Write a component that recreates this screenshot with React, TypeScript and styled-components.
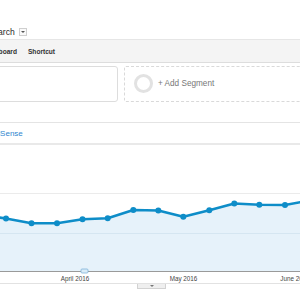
import React from "react";
import styled, { createGlobalStyle } from "styled-components";

const GlobalStyle = createGlobalStyle`
  html, body {
    margin: 0;
    padding: 0;
    background: #ffffff;
    font-family: "Liberation Sans", Arial, sans-serif;
  }
`;

interface IPoint {
  x: number;
  y: number;
}

// sessions per week, already in screen coordinates
const points: IPoint[] = [
  { x: -19, y: 214 },
  { x: 6, y: 217.5 },
  { x: 31.5, y: 222.3 },
  { x: 57, y: 222.3 },
  { x: 82.5, y: 218.3 },
  { x: 107.7, y: 217.3 },
  { x: 133.3, y: 209 },
  { x: 158.3, y: 209.5 },
  { x: 183.3, y: 215.7 },
  { x: 209.3, y: 209.3 },
  { x: 234.3, y: 202.5 },
  { x: 259.3, y: 203.7 },
  { x: 285, y: 204 },
  { x: 310, y: 199.5 },
];

const AXIS_Y = 270;

const monthLabels = [
  { x: 75, text: "April 2016" },
  { x: 183.5, text: "May 2016" },
  { x: 295, text: "June 2016" },
];

function SessionsChart() {
  const line = points.map((p, i) => `${i === 0 ? "M" : "L"}${p.x} ${p.y}`).join(" ");
  const area = `${line} L${points[points.length - 1].x} ${AXIS_Y} L${points[0].x} ${AXIS_Y} Z`;

  return (
    <ChartSvg width="300" height="138" viewBox="0 144 300 138">
      <line x1="0" y1="192.5" x2="300" y2="192.5" stroke="#ebebeb" strokeWidth="1" />
      <path d={area} fill="#e6f2fa" />
      <line x1="0" y1="232.5" x2="300" y2="232.5" stroke="#d5e6f1" strokeWidth="1" />
      <path d={line} fill="none" stroke="#0e8dc8" strokeWidth="2.6" strokeLinejoin="round" />
      {points.map((p) => (
        <circle key={p.x} cx={p.x} cy={p.y} r="3" fill="#0e8dc8" />
      ))}
      <line x1="0" y1={AXIS_Y + 0.5} x2="300" y2={AXIS_Y + 0.5} stroke="#9a9a9a" strokeWidth="1" />
      <rect x="81" y="268" width="7" height="4" rx="1" fill="#d9ecf8" stroke="#7fb3d8" strokeWidth="0.8" />
      {monthLabels.map((m) => (
        <MonthLabel key={m.text} x={m.x} y="279.5" textAnchor="middle">
          {m.text}
        </MonthLabel>
      ))}
    </ChartSvg>
  );
}

function App() {
  return (
    <>
      <GlobalStyle />
      <Frame>
        <TitleRow>
          <ClippedText $shift={-12.5}>Search</ClippedText>
          <DropToggle />
        </TitleRow>
        <ShortcutBar>
          <BarLink $shift={-17.5}>Dashboard</BarLink>
          <BarLink>Shortcut</BarLink>
        </ShortcutBar>
        <SegmentRow>
          <SegmentCard />
          <AddSegment>
            <SegmentRing />
            <span>+ Add Segment</span>
          </AddSegment>
        </SegmentRow>
        <TabsRow>
          <TabLink $shift={-9.7}>AdSense</TabLink>
        </TabsRow>
        <SessionsChart />
        <ChartFooter>
          <ZoomHandle />
        </ChartFooter>
      </Frame>
    </>
  );
}

const Frame = styled.div`
  width: 300px;
  height: 300px;
  overflow: hidden;
  background: #ffffff;
`;

const TitleRow = styled.div`
  height: 39px;
  display: flex;
  align-items: flex-end;
  gap: 4px;
  padding-bottom: 2px;
  box-sizing: border-box;
`;

const ClippedText = styled.span<{ $shift?: number }>`
  margin-left: ${({ $shift }) => $shift ?? 0}px;
  font-size: 8.6px;
  line-height: 10px;
  color: #2b2b2b;
  white-space: nowrap;
`;

const DropToggle = styled.span`
  width: 6px;
  height: 6px;
  margin-bottom: 1px;
  border: 1px solid #cfcfcf;
  background: #fafafa;
  position: relative;

  &::after {
    content: "";
    position: absolute;
    left: 1px;
    top: 2px;
    border-left: 2px solid transparent;
    border-right: 2px solid transparent;
    border-top: 2px solid #555555;
  }
`;

const ShortcutBar = styled.div`
  height: 24px;
  box-sizing: border-box;
  background: #f4f4f4;
  border-top: 1px solid #e6e6e6;
  border-bottom: 1px solid #dddddd;
  display: flex;
  align-items: center;
  gap: 11px;
`;

const BarLink = styled.span<{ $shift?: number }>`
  margin-left: ${({ $shift }) => $shift ?? 0}px;
  font-size: 6.6px;
  font-weight: bold;
  color: #333333;
  white-space: nowrap;
`;

const SegmentRow = styled.div`
  margin-top: 3px;
  height: 36px;
  display: flex;
  gap: 6px;
`;

const SegmentCard = styled.div`
  flex: 0 0 150px;
  margin-left: -32px;
  box-sizing: border-box;
  border: 1px solid #dddddd;
  border-radius: 3px;
  background: #ffffff;
`;

const AddSegment = styled.div`
  flex: 0 0 200px;
  box-sizing: border-box;
  border: 1px dashed #d9d9d9;
  border-radius: 2px;
  display: flex;
  align-items: center;
  gap: 5px;
  padding-left: 9px;
  padding-bottom: 2px;
  font-size: 8.2px;
  color: #777777;
  white-space: nowrap;
`;

const SegmentRing = styled.span`
  width: 13px;
  height: 13px;
  border: 3px solid #e2e2e2;
  border-radius: 50%;
`;

const TabsRow = styled.div`
  margin-top: 20px;
  height: 23px;
  box-sizing: border-box;
  border-top: 1px solid #e4e4e4;
  border-bottom: 2px solid #e9e9e9;
  display: flex;
  align-items: center;
`;

const TabLink = styled.span<{ $shift?: number }>`
  margin-left: ${({ $shift }) => $shift ?? 0}px;
  font-size: 8px;
  color: #2f86cf;
  white-space: nowrap;
`;

const ChartSvg = styled.svg`
  display: block;
`;

const MonthLabel = styled.text`
  font-family: "Liberation Sans", Arial, sans-serif;
  font-size: 6.3px;
  fill: #444444;
`;

const ChartFooter = styled.div`
  border-top: 1px solid #e2e2e2;
  display: flex;
  padding-left: 137px;
`;

const ZoomHandle = styled.div`
  width: 29px;
  height: 5px;
  box-sizing: border-box;
  background: #efefef;
  border: 1px solid #d2d2d2;
  border-top: none;
  position: relative;

  &::after {
    content: "";
    position: absolute;
    left: 12px;
    top: 1px;
    border-left: 2px solid transparent;
    border-right: 2px solid transparent;
    border-top: 2px solid #777777;
  }
`;

export default App;
